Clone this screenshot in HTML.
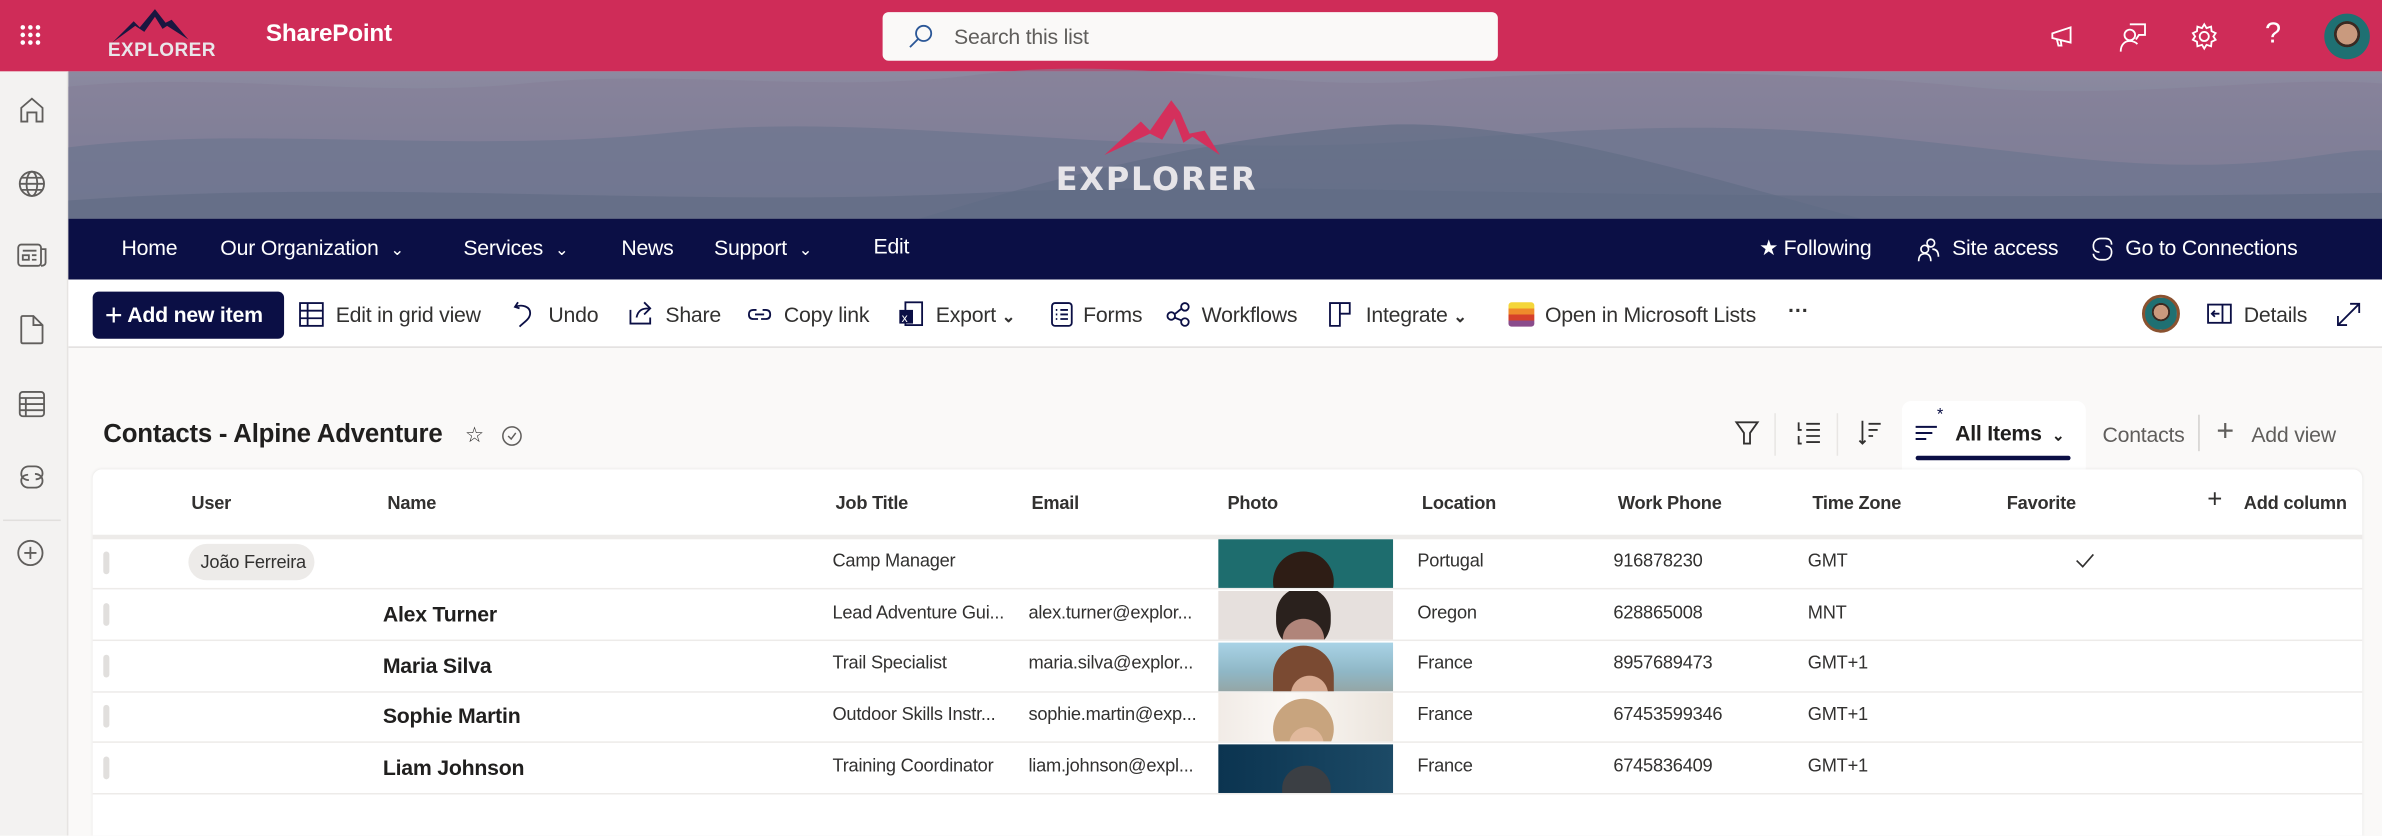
<!DOCTYPE html>
<html><head><meta charset="utf-8">
<style>
*{margin:0;padding:0;box-sizing:border-box}
html,body{width:2382px;height:835px;overflow:hidden;background:#faf9f8}
#w{position:absolute;left:0;top:0;width:1568px;height:550px;transform:scale(1.51913);transform-origin:0 0;font-family:"Segoe UI","Liberation Sans",sans-serif;color:#323130;background:#faf9f8;overflow:hidden;letter-spacing:-0.15px}
.a{position:absolute;white-space:nowrap}
svg{position:absolute;overflow:visible}
.top{left:0;top:0;width:1568px;height:47px;background:#cf2c58}
.rail{left:0;top:47px;width:45px;height:503px;background:#f3f2f1;border-right:1px solid #e6e4e2}
.ban{left:45px;top:47px;width:1523px;height:97px;background:linear-gradient(180deg,#8d8aa0 0%,#7d8299 40%,#6f7890 100%)}
.nav{left:45px;top:144px;width:1523px;height:40px;background:#0b0f45}
.nt{color:#fff;font-size:14px;top:155px}
.cmd{left:45px;top:184px;width:1523px;height:45px;background:#fff;border-bottom:1px solid #e1dfdd}
.ct{font-size:14px;top:199px;color:#323130}
.card{left:61px;top:309px;width:1494px;height:260px;background:#fff;border-radius:6px 6px 0 0;box-shadow:0 0 2px rgba(0,0,0,.08)}
.h{font-size:12px;font-weight:600;top:324px;color:#323130}
.c{font-size:12px;color:#323130}
.n{font-size:14px;font-weight:600;color:#201f1e}
.rl{left:61px;width:1494px;height:1px;background:#edebe9}
.hd{left:68px;width:4px;height:15px;background:#e1dfdd;border-radius:2px}
.ph{left:802px;width:115px;height:32px;overflow:hidden}
</style></head><body><div id="w">
<div class="a top"></div>
<svg style="left:13px;top:16px" width="16" height="16" fill="#fff"><circle cx="2" cy="2" r="1.5"/><circle cx="7" cy="2" r="1.5"/><circle cx="12" cy="2" r="1.5"/><circle cx="2" cy="7" r="1.5"/><circle cx="7" cy="7" r="1.5"/><circle cx="12" cy="7" r="1.5"/><circle cx="2" cy="12" r="1.5"/><circle cx="7" cy="12" r="1.5"/><circle cx="12" cy="12" r="1.5"/></svg>
<svg style="left:74px;top:6px" width="70" height="22"><path d="M0 22 L14 8 L18 12 L28 0 L35 9 L39 7 L50 20 L36 11 L33 13 L28 5 L21 15 L15 11 Z" fill="#1a1640"/></svg>
<div class="a" style="left:71px;top:26px;font-size:12.5px;font-weight:700;color:#e9e6ea;letter-spacing:.3px">EXPLORER</div>
<div class="a" style="left:175px;top:14px;font-size:16px;font-weight:600;color:#fff">SharePoint</div>
<div class="a" style="left:581px;top:8px;width:405px;height:32px;background:#faf9f8;border-radius:4px"></div>
<svg style="left:598px;top:16px" width="16" height="16" fill="none" stroke="#2b5797" stroke-width="1.2"><circle cx="10" cy="6" r="5"/><path d="M6.5 9.5 L1 15"/></svg>
<div class="a" style="left:628px;top:16px;font-size:14px;color:#605e5c">Search this list</div>
<svg style="left:1349px;top:16px" width="16" height="16" fill="none" stroke="#fff" stroke-width="1.2"><path d="M2 6 L14 2 L14 12 L2 9 Z M5 10 L6 14 L8 14 L7.5 10.5"/></svg>
<svg style="left:1395px;top:14px" width="18" height="20" fill="none" stroke="#fff" stroke-width="1.2"><path d="M7 2 H17 V9 H13 L11 12"/><circle cx="7" cy="9" r="3.5"/><path d="M1 20 C1 15 4 13 7 13 C9 13 11 14 12 15"/></svg>
<svg style="left:1442px;top:15px" width="18" height="18" fill="none" stroke="#fff" stroke-width="1.2"><circle cx="9" cy="9" r="3"/><path d="M9 1 L10.5 3.5 L13.5 2.5 L13.8 5.5 L16.5 6.8 L15 9 L16.5 11.2 L13.8 12.5 L13.5 15.5 L10.5 14.5 L9 17 L7.5 14.5 L4.5 15.5 L4.2 12.5 L1.5 11.2 L3 9 L1.5 6.8 L4.2 5.5 L4.5 2.5 L7.5 3.5 Z"/></svg>
<div class="a" style="left:1491px;top:12px;font-size:19px;color:#fff;font-weight:300">?</div>
<div class="a" style="left:1530px;top:9px;width:30px;height:30px;border-radius:50%;background:radial-gradient(circle at 50% 45%,#c99a7e 0 30%,#3a2a22 31% 38%,#1f7072 39%)"></div>
<div class="a rail"></div>
<svg style="left:12px;top:63px" width="18" height="18" fill="none" stroke="#605e5c" stroke-width="1.2"><path d="M2 17 V8 L9 2 L16 8 V17 H12 V11 H6 V17 Z"/></svg>
<svg style="left:12px;top:112px" width="18" height="18" fill="none" stroke="#605e5c" stroke-width="1.2"><circle cx="9" cy="9" r="8"/><ellipse cx="9" cy="9" rx="3.5" ry="8"/><path d="M1 9 H17 M2 5 H16 M2 13 H16"/></svg>
<svg style="left:11px;top:160px" width="20" height="16" fill="none" stroke="#605e5c" stroke-width="1.2"><rect x="1" y="1" width="15" height="14" rx="2"/><path d="M16 4 H19 V13 C19 14 18 15 16 15"/><rect x="4" y="8" width="4" height="3"/><path d="M4 5 H13 M10 8 H13 M10 11 H13"/></svg>
<svg style="left:13px;top:207px" width="16" height="20" fill="none" stroke="#605e5c" stroke-width="1.2"><path d="M1 2 Q1 1 2 1 H9 L15 7 V18 Q15 19 14 19 H2 Q1 19 1 18 Z M9 1 V7 H15"/></svg>
<svg style="left:12px;top:257px" width="18" height="18" fill="none" stroke="#605e5c" stroke-width="1.2"><rect x="1" y="1" width="16" height="16" rx="2"/><path d="M1 5 H17 M1 9 H17 M1 13 H17 M5 5 V17"/></svg>
<svg style="left:12px;top:305px" width="18" height="18" fill="none" stroke="#605e5c" stroke-width="1.2"><path d="M7 11 C4 11 2 9 2 7 C2 4 4 2 7 2 H11 C14 2 16 4 16 6.5 C16 9 14 10.5 11.5 10.5 M11 7 C14 7 16 9 16 11.5 C16 14 14 16 11 16 H7 C4 16 2 14 2 11.5 C2 9 4 7.5 6.5 7.5"/></svg>
<div class="a" style="left:2px;top:342px;width:38px;height:1px;background:#e1dfdd"></div>
<svg style="left:11px;top:355px" width="18" height="18" fill="none" stroke="#605e5c" stroke-width="1.2"><circle cx="9" cy="9" r="8"/><path d="M9 5 V13 M5 9 H13"/></svg>
<div class="a ban">
<svg style="left:0;top:0" width="1523" height="97"><path d="M0 10 C100 0 200 18 300 8 S500 15 600 2 S800 14 900 6 S1150 0 1250 10 S1450 2 1523 8 V97 H0 Z" fill="#857f98" opacity=".6"/><path d="M0 50 C120 35 260 55 400 40 S700 60 900 45 S1150 38 1300 55 S1480 50 1523 52 V97 H0 Z" fill="#6c758e" opacity=".7"/><path d="M560 97 C680 60 780 40 870 35 C960 32 1080 70 1180 97 Z" fill="#636d86" opacity=".7"/><path d="M0 85 C200 70 400 90 600 80 S1000 88 1523 80 V97 H0 Z" fill="#5f6a84" opacity=".6"/></svg>
</div>
<svg style="left:727px;top:64px" width="76" height="38"><path d="M0 38 L24 16 L30 22 L44 2 L50 10 L56 24 L66 22 L76 38 L58 26 L52 30 L46 14 L38 28 L30 24 Z" fill="#d4305c"/></svg>
<div class="a" style="left:695px;top:106px;font-size:21px;font-weight:700;color:#e6e4e8;letter-spacing:1.2px;font-family:'DejaVu Sans','Liberation Sans',sans-serif">EXPLORER</div>
<div class="a nav"></div>
<div class="a nt" style="left:80px">Home</div>
<div class="a nt" style="left:145px">Our Organization <span style="font-size:11px;margin-left:4px">&#8964;</span></div>
<div class="a nt" style="left:305px">Services <span style="font-size:11px;margin-left:4px">&#8964;</span></div>
<div class="a nt" style="left:409px">News</div>
<div class="a nt" style="left:470px">Support <span style="font-size:11px;margin-left:4px">&#8964;</span></div>
<div class="a nt" style="left:575px;top:154px">Edit</div>
<div class="a nt" style="left:1158px">★ Following</div>
<svg style="left:1263px;top:156px" width="14" height="16" fill="none" stroke="#fff" stroke-width="1.1"><circle cx="8" cy="4" r="2.5"/><circle cx="4" cy="8" r="2.5"/><path d="M0 16 C0 12 2 11 4 11 C6 11 8 12 8 16 M9 8 C12 8 13 10 13 13"/></svg>
<div class="a nt" style="left:1285px">Site access</div>
<svg style="left:1377px;top:156px" width="14" height="16" fill="none" stroke="#fff" stroke-width="1.1"><path d="M5 10 C2 10 1 8 1 6 C1 3 3 1 6 1 H9 C12 1 13 3 13 5 M9 6 C12 6 13 8 13 10 C13 13 11 15 8 15 H6 C3 15 1 13 1 11"/></svg>
<div class="a nt" style="left:1399px">Go to Connections</div>
<div class="a cmd"></div>
<div class="a" style="left:61px;top:192px;width:126px;height:31px;background:#0b0f45;border-radius:4px"></div>
<div class="a" style="left:69px;top:197px;font-size:14px;color:#fff;font-weight:600"><span style="font-size:20px;font-weight:300;vertical-align:-2px">+</span> Add new item</div>
<svg style="left:197px;top:199px" width="16" height="16" fill="none" stroke="#0b0f45" stroke-width="1.2"><rect x=".5" y=".5" width="15" height="15"/><path d="M.5 5.5 H15.5 M.5 10.5 H15.5 M5.5 .5 V15.5"/></svg>
<div class="a ct" style="left:221px">Edit in grid view</div>
<svg style="left:338px;top:198px" width="14" height="18" fill="none" stroke="#0b0f45" stroke-width="1.2"><path d="M3 1 L1 4 L4 5 M1 4 C6 2 11 4 11 8 C11 12 7 14 4 17"/></svg>
<div class="a ct" style="left:361px">Undo</div>
<svg style="left:414px;top:198px" width="16" height="16" fill="none" stroke="#0b0f45" stroke-width="1.2"><path d="M1 6 V15 H14 V11 M5 11 C6 6 9 5 13 5 M10 1 L14 5 L10 9"/></svg>
<div class="a ct" style="left:438px">Share</div>
<svg style="left:492px;top:200px" width="16" height="14" fill="none" stroke="#0b0f45" stroke-width="1.2"><path d="M6 4 H4 C2 4 1 5 1 7 C1 9 2 10 4 10 H7 M10 4 H12 C14 4 15 5 15 7 C15 9 14 10 12 10 H9 M5 7 H11"/></svg>
<div class="a ct" style="left:516px">Copy link</div>
<svg style="left:592px;top:198px" width="16" height="18"><rect x="4" y="1" width="11" height="15" fill="none" stroke="#0b0f45" stroke-width="1.2"/><rect x="0" y="6" width="9" height="9" fill="#0b0f45"/><text x="1.5" y="14" font-size="8" fill="#fff" font-family="Liberation Sans">x</text></svg>
<div class="a ct" style="left:616px">Export <span style="font-size:11px;font-weight:700">&#8964;</span></div>
<svg style="left:692px;top:199px" width="14" height="16" fill="none" stroke="#0b0f45" stroke-width="1.2"><rect x=".5" y=".5" width="13" height="15" rx="2"/><path d="M3 5 H4 M6 5 H11 M3 8 H4 M6 8 H11 M3 11 H4 M6 11 H11"/></svg>
<div class="a ct" style="left:713px">Forms</div>
<svg style="left:768px;top:199px" width="16" height="16" fill="none" stroke="#0b0f45" stroke-width="1.2"><circle cx="12" cy="3" r="2.5"/><circle cx="3" cy="9" r="2.5"/><circle cx="12" cy="13" r="2.5"/><path d="M5 8 L10 4 M5 10 L10 12"/></svg>
<div class="a ct" style="left:791px">Workflows</div>
<svg style="left:875px;top:199px" width="14" height="16" fill="none" stroke="#0b0f45" stroke-width="1.2"><path d="M.5 .5 H13.5 V7.5 H7 V15.5 H.5 Z M7 .5 V7.5"/></svg>
<div class="a ct" style="left:899px">Integrate <span style="font-size:11px;font-weight:700">&#8964;</span></div>
<div class="a" style="left:993px;top:199px;width:17px;height:16px;background:linear-gradient(180deg,#f4d63a 0 25%,#ef8a2b 25% 50%,#d6402a 50% 75%,#8a4c8c 75%);border-radius:2px"></div>
<div class="a ct" style="left:1017px">Open in Microsoft Lists</div>
<div class="a ct" style="left:1177px;top:196px;font-weight:700">···</div>
<div class="a" style="left:1410px;top:194px;width:25px;height:25px;border-radius:50%;border:2px solid #8a5230;background:radial-gradient(circle at 50% 45%,#c99a7e 0 30%,#3a2a22 31% 38%,#1f7072 39%)"></div>
<svg style="left:1453px;top:200px" width="16" height="14" fill="none" stroke="#0b0f45" stroke-width="1.2"><rect x=".5" y=".5" width="15" height="12"/><path d="M10 .5 V12.5 M8 6.5 H3 M5 4.5 L3 6.5 L5 8.5"/></svg>
<div class="a ct" style="left:1477px">Details</div>
<svg style="left:1538px;top:199px" width="16" height="16" fill="none" stroke="#0b0f45" stroke-width="1.2"><path d="M1 15 L15 1 M9 1 H15 V7 M1 9 V15 H7"/></svg>
<div class="a" style="left:68px;top:276px;font-size:17px;font-weight:600;color:#201f1e">Contacts - Alpine Adventure</div>
<div class="a" style="left:306px;top:278px;font-size:14px;color:#323130">☆</div>
<svg style="left:330px;top:280px" width="14" height="14" fill="none" stroke="#605e5c" stroke-width="1"><circle cx="7" cy="7" r="6"/><path d="M4.5 7 L6.5 9 L9.5 5"/></svg>
<svg style="left:1142px;top:277px" width="16" height="16" fill="none" stroke="#323130" stroke-width="1.2"><path d="M1 1 H15 L10 8 V15 H6 V8 Z"/></svg>
<div class="a" style="left:1168px;top:272px;width:1px;height:28px;background:#e8e6e4"></div>
<svg style="left:1183px;top:277px" width="16" height="16" fill="none" stroke="#323130" stroke-width="1.2"><path d="M1 1 V6 H3 M1 10 V15 H3 M6 2 H15 M6 6 H15 M6 10 H15 M6 14 H15"/></svg>
<div class="a" style="left:1209px;top:272px;width:1px;height:28px;background:#e8e6e4"></div>
<svg style="left:1223px;top:276px" width="16" height="18" fill="none" stroke="#323130" stroke-width="1.2"><path d="M3 1 V16 M1 14 L3 16 L5 14 M7 3 H15 M7 7 H13 M7 11 H10"/></svg>
<div class="a" style="left:1252px;top:264px;width:121px;height:46px;background:#fff;border-radius:6px 6px 0 0"></div>
<svg style="left:1261px;top:278px" width="18" height="14" fill="none" stroke="#0b0f45" stroke-width="1.3"><path d="M0 3 H14 M0 7 H11 M0 11 H7"/></svg>
<div class="a" style="left:1275px;top:267px;font-size:11px;color:#0b0f45">*</div>
<div class="a" style="left:1287px;top:277px;font-size:14px;font-weight:600;color:#201f1e">All Items <span style="font-size:10px;margin-left:3px">&#8964;</span></div>
<div class="a" style="left:1261px;top:300px;width:102px;height:3px;background:#0b0f45;border-radius:2px"></div>
<div class="a" style="left:1384px;top:278px;font-size:14px;color:#605e5c">Contacts</div>
<div class="a" style="left:1447px;top:273px;width:1px;height:24px;background:#d2d0ce"></div>
<div class="a" style="left:1459px;top:273px;font-size:20px;font-weight:300;color:#605e5c">+</div>
<div class="a" style="left:1482px;top:278px;font-size:14px;color:#605e5c">Add view</div>
<div class="a card"></div>
<div class="a h" style="left:126px">User</div>
<div class="a h" style="left:255px">Name</div>
<div class="a h" style="left:550px">Job Title</div>
<div class="a h" style="left:679px">Email</div>
<div class="a h" style="left:808px">Photo</div>
<div class="a h" style="left:936px">Location</div>
<div class="a h" style="left:1065px">Work Phone</div>
<div class="a h" style="left:1193px">Time Zone</div>
<div class="a h" style="left:1321px">Favorite</div>
<div class="a" style="left:1453px;top:319px;font-size:17px;font-weight:300;color:#323130">+</div>
<div class="a h" style="left:1477px">Add column</div>
<div class="a" style="left:61px;top:352px;width:1494px;height:3px;background:#edebe9"></div>
<div class="a rl" style="top:387px"></div>
<div class="a rl" style="top:421px"></div>
<div class="a rl" style="top:455px"></div>
<div class="a rl" style="top:488px"></div>
<div class="a rl" style="top:522px"></div>
<div class="a hd" style="top:363px"></div>
<div class="a hd" style="top:397px"></div>
<div class="a hd" style="top:431px"></div>
<div class="a hd" style="top:464px"></div>
<div class="a hd" style="top:498px"></div>
<div class="a" style="left:124px;top:358px;width:83px;height:24px;border-radius:12px;background:#edebe9"></div>
<div class="a c" style="left:132px;top:363px">João Ferreira</div>
<div class="a c" style="left:548px;top:362px">Camp Manager</div>
<div class="a ph" style="top:355px;background:#1e6d6e"><div class="a" style="left:36px;top:8px;width:40px;height:40px;border-radius:50%;background:#2e1d15"></div></div>
<div class="a c" style="left:933px;top:362px">Portugal</div>
<div class="a c" style="left:1062px;top:362px">916878230</div>
<div class="a c" style="left:1190px;top:362px">GMT</div>
<svg style="left:1366px;top:364px" width="13" height="10" fill="none" stroke="#323130" stroke-width="1.1"><path d="M1 5 L5 9 L12 1"/></svg>
<div class="a n" style="left:252px;top:396px">Alex Turner</div>
<div class="a c" style="left:548px;top:396px">Lead Adventure Gui...</div>
<div class="a c" style="left:677px;top:396px">alex.turner@explor...</div>
<div class="a ph" style="top:389px;background:#e6e0dd"><div class="a" style="left:38px;top:-2px;width:36px;height:40px;border-radius:45%;background:radial-gradient(circle at 50% 85%,#b0857a 0 35%,#2a211d 36%)"></div></div>
<div class="a c" style="left:933px;top:396px">Oregon</div>
<div class="a c" style="left:1062px;top:396px">628865008</div>
<div class="a c" style="left:1190px;top:396px">MNT</div>
<div class="a n" style="left:252px;top:430px">Maria Silva</div>
<div class="a c" style="left:548px;top:429px">Trail Specialist</div>
<div class="a c" style="left:677px;top:429px">maria.silva@explor...</div>
<div class="a ph" style="top:423px;background:linear-gradient(180deg,#a9d3e6,#8fb7c6 60%,#94a6a6)"><div class="a" style="left:36px;top:2px;width:40px;height:40px;border-radius:50% 50% 10% 10%;background:radial-gradient(circle at 60% 80%,#d7a990 0 30%,#7a4a32 31%)"></div></div>
<div class="a c" style="left:933px;top:429px">France</div>
<div class="a c" style="left:1062px;top:429px">8957689473</div>
<div class="a c" style="left:1190px;top:429px">GMT+1</div>
<div class="a n" style="left:252px;top:463px">Sophie Martin</div>
<div class="a c" style="left:548px;top:463px">Outdoor Skills Instr...</div>
<div class="a c" style="left:677px;top:463px">sophie.martin@exp...</div>
<div class="a ph" style="top:456px;background:linear-gradient(90deg,#f1ebe6,#fbf8f5 40%,#ebe4dc)"><div class="a" style="left:36px;top:4px;width:40px;height:40px;border-radius:50%;background:radial-gradient(circle at 55% 75%,#e1b99c 0 30%,#c8a47e 31%)"></div></div>
<div class="a c" style="left:933px;top:463px">France</div>
<div class="a c" style="left:1062px;top:463px">67453599346</div>
<div class="a c" style="left:1190px;top:463px">GMT+1</div>
<div class="a n" style="left:252px;top:497px">Liam Johnson</div>
<div class="a c" style="left:548px;top:497px">Training Coordinator</div>
<div class="a c" style="left:677px;top:497px">liam.johnson@expl...</div>
<div class="a ph" style="top:490px;background:linear-gradient(90deg,#0b3450,#1c4a66)"><div class="a" style="left:42px;top:14px;width:32px;height:30px;border-radius:50% 50% 0 0;background:#3b3f44"></div></div>
<div class="a c" style="left:933px;top:497px">France</div>
<div class="a c" style="left:1062px;top:497px">6745836409</div>
<div class="a c" style="left:1190px;top:497px">GMT+1</div>
</div></body></html>
